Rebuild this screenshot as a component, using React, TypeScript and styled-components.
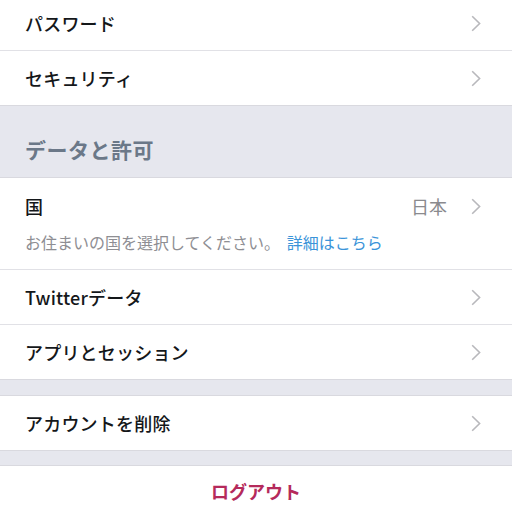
import styled, { createGlobalStyle } from 'styled-components';

const GlobalStyle = createGlobalStyle`
  html, body {
    margin: 0;
    padding: 0;
    background: #ffffff;
  }
  body {
    font-family: "Noto Sans CJK JP", "Noto Sans", sans-serif;
    color: #14171a;
    overflow: hidden;
  }
`;

type Item = { label: string; value?: string; note?: boolean };

const topItems: Item[] = [{ label: 'パスワード' }, { label: 'セキュリティ' }];
const dataItems: Item[] = [
  { label: '国', value: '日本', note: true },
  { label: 'Twitterデータ' },
  { label: 'アプリとセッション' },
];

function Chevron() {
  return (
    <ChevronSvg width="10" height="17" viewBox="0 0 10 17">
      <path d="M1.2 1.2 L8.6 8.5 L1.2 15.8" fill="none" stroke="#b8b8bc" strokeWidth="1.6" />
    </ChevronSvg>
  );
}

function SettingRow({ item, first }: { item: Item; first?: boolean }) {
  return (
    <Row $divider={!first}>
      <RowMain $note={!!item.note}>
        <Label>{item.label}</Label>
        {item.value && <Value>{item.value}</Value>}
        <Chevron />
      </RowMain>
      {item.note && (
        <Note>
          お住まいの国を選択してください。 <NoteLink>詳細はこちら</NoteLink>
        </Note>
      )}
    </Row>
  );
}

export default function App() {
  return (
    <>
      <GlobalStyle />
      <Screen>
        <Group>
          {topItems.map((item, i) => (
            <SettingRow key={item.label} item={item} first={i === 0} />
          ))}
        </Group>
        <SectionHeader>データと許可</SectionHeader>
        <Group>
          {dataItems.map((item, i) => (
            <SettingRow key={item.label} item={item} first={i === 0} />
          ))}
        </Group>
        <Spacer $height={15} />
        <Group>
          <SettingRow item={{ label: 'アカウントを削除' }} first />
        </Group>
        <Spacer $height={14} />
        <Logout>ログアウト</Logout>
      </Screen>
    </>
  );
}

const Screen = styled.div`
  width: 512px;
  height: 516px;
  margin-top: -4px;
  display: flex;
  flex-direction: column;
  background: #e6e7ee;
`;

const Group = styled.div`
  display: flex;
  flex-direction: column;
  background: #ffffff;
  border-bottom: 1px solid #d9d9df;
`;

const Row = styled.div<{ $divider: boolean }>`
  display: flex;
  flex-direction: column;
  justify-content: center;
  min-height: 54px;
  padding-left: 25px;
  border-top: ${({ $divider }) => ($divider ? '1px solid #e1e1e6' : 'none')};
`;

const RowMain = styled.div<{ $note: boolean }>`
  display: flex;
  align-items: center;
  height: ${({ $note }) => ($note ? '56px' : 'auto')};
  padding-right: 31px;
`;

const Label = styled.span`
  flex: 1;
  font-size: 18px;
  font-weight: 500;
  line-height: 24px;
  letter-spacing: 0.2px;
`;

const Value = styled.span`
  font-size: 18px;
  color: #8a8a8e;
  margin-right: 24px;
`;

const ChevronSvg = styled.svg`
  display: block;
  flex: none;
`;

const Note = styled.div`
  font-size: 16px;
  color: #8e8e93;
  line-height: 20px;
  padding-bottom: 17px;
  margin-top: -2px;
`;

const NoteLink = styled.span`
  color: #3b94d9;
  margin-left: 3px;
`;

const SectionHeader = styled.div`
  height: 72px;
  box-sizing: border-box;
  padding: 28px 25px 0;
  font-size: 21px;
  font-weight: 700;
  color: #6b7888;
  background: #e6e7ee;
  border-bottom: 1px solid #d9d9df;
  letter-spacing: 0.5px;
`;

const Spacer = styled.div<{ $height: number }>`
  height: ${({ $height }) => `${$height}px`};
  flex: none;
  border-bottom: 1px solid #d9d9df;
`;

const Logout = styled.div`
  flex: 1;
  background: #ffffff;
  display: flex;
  justify-content: center;
  padding-top: 12px;
  font-size: 18px;
  font-weight: 700;
  color: #b52a5b;
`;
